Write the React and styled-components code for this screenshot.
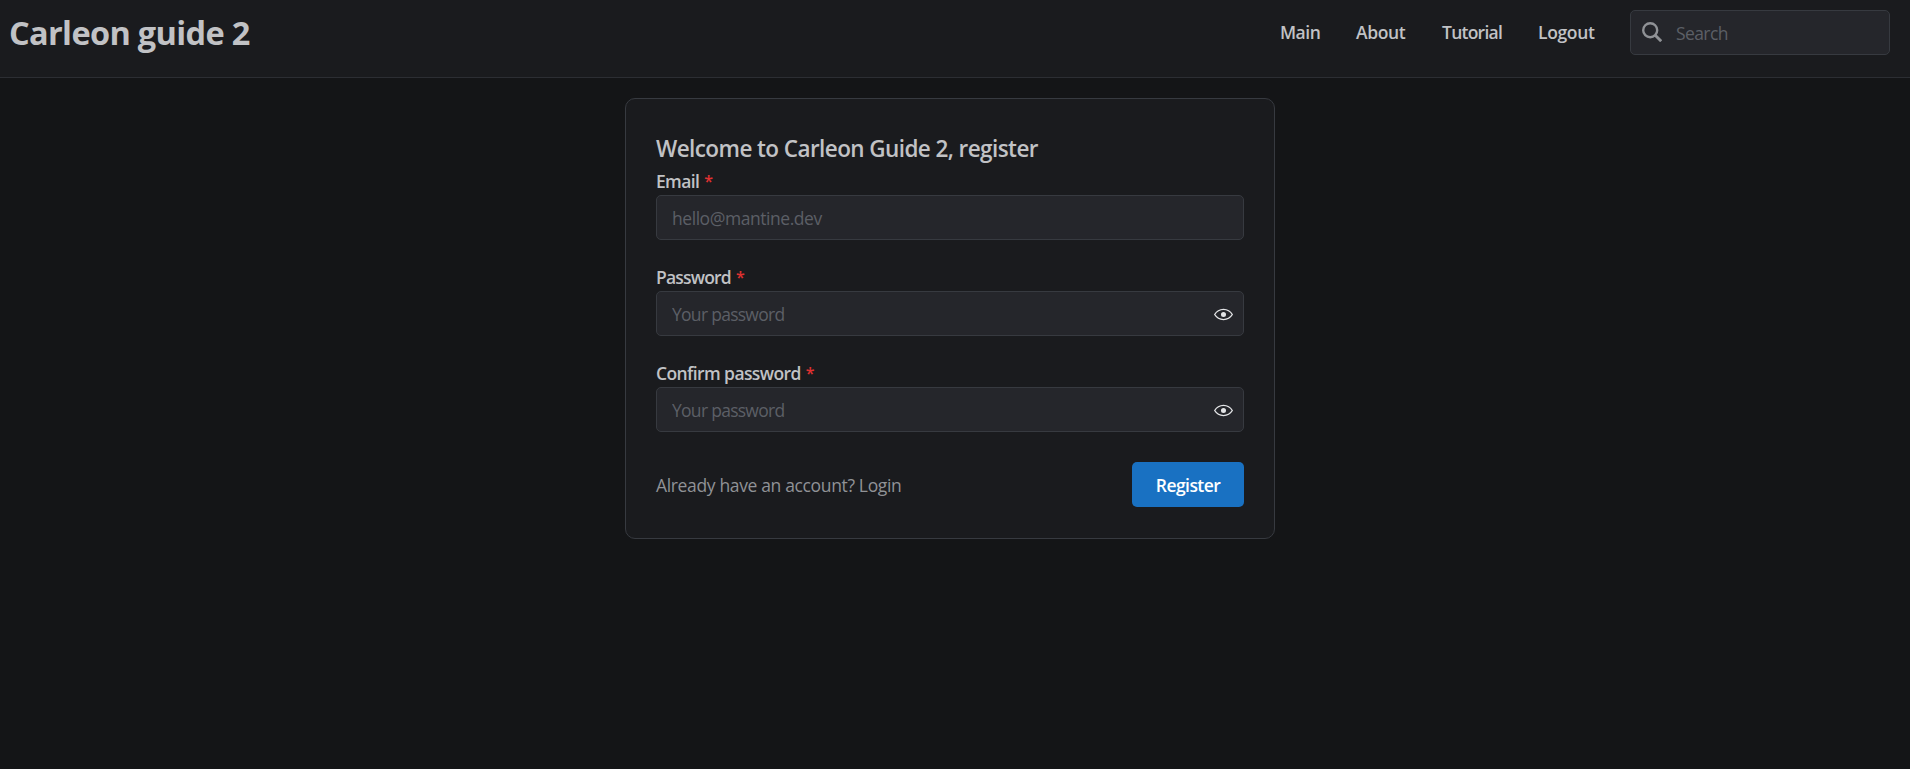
import React from "react";
import styled, { createGlobalStyle } from "styled-components";

const GlobalStyle = createGlobalStyle`
  *, *::before, *::after { box-sizing: border-box; }
  body {
    margin: 0;
    background: #141517;
    color: #c1c2c5;
    font-family: "Open Sans", "Noto Sans", sans-serif;
    font-size: 17.5px;
    line-height: 27px;
  }
`;

const Page = styled.div`
  display: flex;
  flex-direction: column;
  min-height: 100vh;
`;

const Header = styled.header`
  display: flex;
  justify-content: space-between;
  align-items: flex-start;
  height: 78px;
  padding: 10px 20px 0 9px;
  background: #1a1b1e;
  border-bottom: 1px solid #2c2e33;
`;

const Brand = styled.h1`
  margin: 0;
  font-size: 32.5px;
  line-height: 45px;
  font-weight: 700;
  letter-spacing: -0.66px;
  white-space: nowrap;
`;

const HeaderRight = styled.div`
  display: flex;
  align-items: center;
  height: 45px;
`;

const Nav = styled.nav`
  display: flex;
  margin-right: 35px;
  gap: 36px;
`;

const NavLink = styled.a`
  width: ${(p) => p.$width}px;
  color: inherit;
  font-weight: 600;
  letter-spacing: ${(p) => p.$spacing}px;
  text-decoration: none;
  white-space: nowrap;
`;

const InputBox = styled.div`
  display: flex;
  align-items: center;
  width: ${(p) => (p.$width ? p.$width + "px" : "100%")};
  height: 45px;
  padding: 0 10px 0 ${(p) => p.$left ?? 15}px;
  background: #25262b;
  border: 1px solid #373a40;
  border-radius: 5px;
`;

const Input = styled.input`
  flex: 1;
  min-width: 0;
  height: 100%;
  padding: 0;
  border: 0;
  outline: 0;
  background: transparent;
  color: #c1c2c5;
  font: inherit;
  letter-spacing: ${(p) => p.$spacing}px;
  &::placeholder { color: #5c5f66; opacity: 1; }
`;

const Card = styled.form`
  width: 650px;
  height: 441px;
  margin: 20px 0 0 625px;
  padding: 32px 30px 30px;
  background: #1a1b1e;
  border: 1px solid #373a40;
  border-radius: 10px;
`;

const Title = styled.h2`
  margin: 0 0 2px;
  font-size: 22.5px;
  line-height: 35px;
  font-weight: 600;
  letter-spacing: -0.58px;
  white-space: nowrap;
`;

const FieldBlock = styled.div`
  margin-bottom: 24px;
`;

const Label = styled.label`
  display: flex;
  gap: 5px;
  height: 27px;
  font-weight: 600;
  letter-spacing: ${(p) => p.$spacing}px;
`;

const Required = styled.span`
  color: #e03131;
  font-size: 16px;
`;

const Footer = styled.div`
  display: flex;
  align-items: center;
  justify-content: space-between;
  margin-top: 30px;
`;

const LoginHint = styled.a`
  padding-top: 2px;
  color: #909296;
  letter-spacing: -0.35px;
`;

const Submit = styled.button`
  width: 112px;
  height: 45px;
  padding: 2px 0 0;
  border: 0;
  border-radius: 5px;
  background: #1971c2;
  color: #fff;
  font: inherit;
  font-weight: 600;
  letter-spacing: -0.58px;
`;

const SearchGlyph = styled.svg`
  flex: none;
  width: 20px;
  height: 20px;
  margin: 0 14px 1px 0;
  color: #909296;
`;

const EyeGlyph = styled.svg`
  flex: none;
  width: 19px;
  height: 19px;
  margin-top: 1px;
  color: #e3e4e6;
`;

const SearchIcon = () => (
  <SearchGlyph viewBox="0 0 20 20" fill="none" stroke="currentColor" strokeWidth="2.4">
    <circle cx="8.2" cy="8.2" r="7" />
    <path d="M13.2 13.2l6 6" strokeWidth="2.9" />
  </SearchGlyph>
);

const EyeIcon = () => (
  <EyeGlyph viewBox="0 0 15 15" fill="currentColor" fillRule="evenodd">
    <path d="M7.5 11C4.8 11 2.52 9.62 1.1 7.5 2.52 5.38 4.8 4 7.5 4s4.98 1.38 6.4 3.5C12.48 9.62 10.2 11 7.5 11zm0 1c3.2 0 5.87-1.71 7.42-4.24a.5.5 0 0 0 0-.52C13.37 4.71 10.7 3 7.5 3S1.63 4.71.08 7.24a.5.5 0 0 0 0 .52C1.63 10.29 4.3 12 7.5 12zm0-2.5a2 2 0 1 0 0-4 2 2 0 0 0 0 4z" />
  </EyeGlyph>
);

function Field({ label, placeholder, type, labelSpacing, spacing }) {
  return (
    <FieldBlock>
      <Label $spacing={labelSpacing}>
        {label}
        <Required>*</Required>
      </Label>
      <InputBox>
        <Input type={type} placeholder={placeholder} $spacing={spacing} />
        {type === "password" && <EyeIcon />}
      </InputBox>
    </FieldBlock>
  );
}

export default function App() {
  return (
    <Page>
      <GlobalStyle />
      <Header>
        <Brand>Carleon guide 2</Brand>
        <HeaderRight>
          <Nav>
            <NavLink $width={40} $spacing={-0.5}>Main</NavLink>
            <NavLink $width={50} $spacing={-0.35}>About</NavLink>
            <NavLink $width={60} $spacing={-0.75}>Tutorial</NavLink>
            <NavLink $width={57} $spacing={-0.35}>Logout</NavLink>
          </Nav>
          <InputBox $width={260} $left={11}>
            <SearchIcon />
            <Input placeholder="Search" $spacing={-0.6} />
          </InputBox>
        </HeaderRight>
      </Header>
      <Card>
        <Title>Welcome to Carleon Guide 2, register</Title>
        <Field label="Email" type="email" placeholder="hello@mantine.dev" labelSpacing={-0.65} spacing={-0.45} />
        <Field label="Password" type="password" placeholder="Your password" labelSpacing={-0.8} spacing={-0.72} />
        <Field label="Confirm password" type="password" placeholder="Your password" labelSpacing={-0.6} spacing={-0.72} />
        <Footer>
          <LoginHint>Already have an account? Login</LoginHint>
          <Submit type="button">Register</Submit>
        </Footer>
      </Card>
    </Page>
  );
}
